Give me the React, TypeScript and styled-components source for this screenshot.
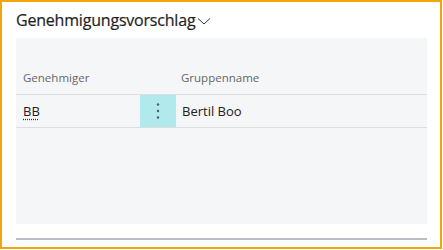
import React from "react";
import styled, { createGlobalStyle } from "styled-components";

const GlobalStyle = createGlobalStyle`
  body {
    margin: 0;
    background: #fff;
    font-family: "Open Sans", "Noto Sans", sans-serif;
  }
`;

const Frame = styled.div`
  width: 442px;
  height: 249px;
  box-sizing: border-box;
  border: 2px solid #f3a50c;
  padding: 0 13px 0 14px;
  display: flex;
  flex-direction: column;
`;

const Title = styled.div`
  display: flex;
  align-items: center;
  gap: 2px;
  height: 36px;
  font-size: 16px;
  color: #1e1e1e;
  letter-spacing: -0.2px;
  -webkit-text-stroke: 0.2px #1e1e1e;
  svg {
    margin-top: 2px;
  }
`;

const Panel = styled.div`
  height: 186px;
  background: #f5f6f8;
  display: flex;
  flex-direction: column;
`;

const Row = styled.div<{ $head?: boolean }>`
  display: grid;
  grid-template-columns: 124px 36px 1fr;
  height: ${(p) => (p.$head ? "56px" : "32px")};
  border-bottom: 1px solid #dcdee2;
  align-items: ${(p) => (p.$head ? "end" : "stretch")};
`;

const HeadCell = styled.div<{ $pad?: number }>`
  padding: 0 0 9px ${(p) => p.$pad ?? 7}px;
  font-size: 11.5px;
  color: #666;
`;

const Cell = styled.div<{ $pad?: number }>`
  display: flex;
  align-items: center;
  padding-left: ${(p) => p.$pad ?? 7}px;
  font-size: 13px;
  color: #212121;
`;

const Code = styled.span`
  text-decoration: underline dotted #333;
  text-underline-offset: 3px;
`;

const MenuCell = styled.div`
  background: #b2e9ec;
  display: flex;
  align-items: center;
  justify-content: center;
`;

const BottomLine = styled.div`
  margin-top: 14px;
  height: 2px;
  background: #b9bcc4;
`;

const Chevron = () => (
  <svg width="14" height="10" viewBox="0 0 14 10">
    <path d="M1 2.5 L7 8 L13 2.5" fill="none" stroke="#333" strokeWidth="1" />
  </svg>
);

const Dots = () => (
  <svg width="4" height="16" viewBox="0 0 4 16">
    <circle cx="2" cy="1.5" r="1.2" fill="#4d5b66" />
    <circle cx="2" cy="8" r="1.2" fill="#4d5b66" />
    <circle cx="2" cy="14.5" r="1.2" fill="#4d5b66" />
  </svg>
);

const App = () => {
  return (
    <>
      <GlobalStyle />
      <Frame>
        <Title>
          Genehmigungsvorschlag
          <Chevron />
        </Title>
        <Panel>
          <Row $head>
            <HeadCell>Genehmiger</HeadCell>
            <div />
            <HeadCell $pad={5}>Gruppenname</HeadCell>
          </Row>
          <Row>
            <Cell>
              <Code>BB</Code>
            </Cell>
            <MenuCell>
              <Dots />
            </MenuCell>
            <Cell $pad={6}>Bertil Boo</Cell>
          </Row>
        </Panel>
        <BottomLine />
      </Frame>
    </>
  );
};

export default App;
